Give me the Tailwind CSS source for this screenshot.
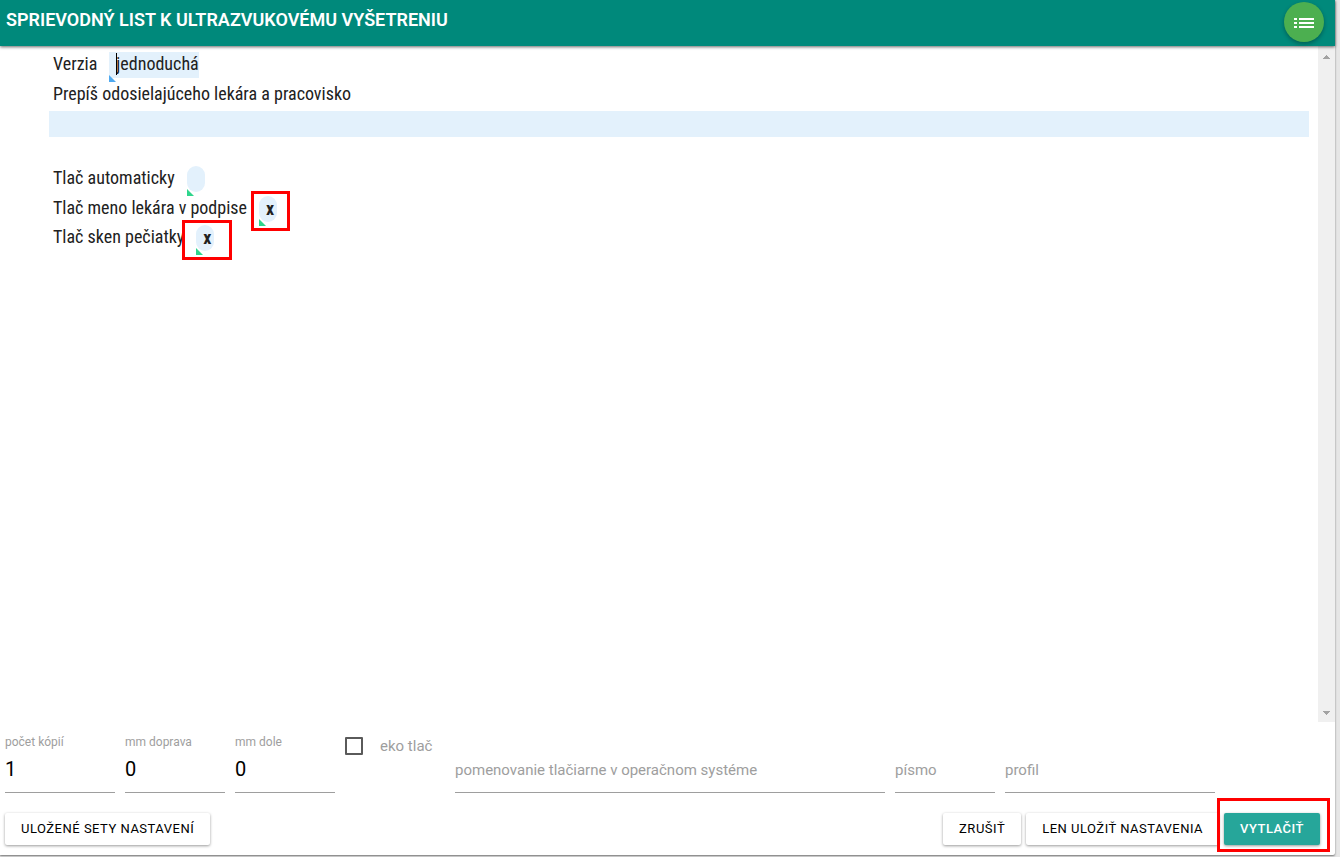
<!DOCTYPE html>
<html lang="sk">
<head>
    <meta charset="UTF-8">
    <meta name="viewport" content="width=device-width, initial-scale=1.0">
    <title>Sprievodný list</title>
    <script src="https://cdn.jsdelivr.net/npm/@tailwindcss/browser@4"></script>
</head>
<body class="bg-[#e6e6e6] font-[Roboto,sans-serif] text-black">
    <div class="h-screen pr-[5px] pb-[2px]">
        <div class="flex flex-col h-full bg-white rounded-br-xs shadow-[0_1px_2px_rgba(0,0,0,0.5)]">
            <header class="relative z-10 flex justify-between h-[46px] shrink-0 bg-[#00897b] pl-1.5 pr-[11px] shadow-[0_1px_3px_rgba(0,0,0,0.6)]">
                <h1 class="pt-1.5 text-[18px] leading-[27px] font-semibold text-white">SPRIEVODNÝ LIST K ULTRAZVUKOVÉMU VYŠETRENIU</h1>
                <button type="button" aria-label="Menu" class="mt-0.5 size-10 shrink-0 rounded-full bg-[#4caf50] shadow-[0_2px_4px_rgba(0,0,0,0.3)] flex items-center justify-center">
                    <svg class="w-5 h-3 text-white" viewBox="0 0 20 12" fill="currentColor" shape-rendering="crispEdges">
                        <path d="M0 2h3v2H0zM5 2h15v2H5zM0 6h3v2H0zM5 6h15v2H5zM0 10h3v2H0zM5 10h15v2H5z"></path>
                    </svg>
                </button>
            </header>

            <main class="flex flex-1 min-h-0">
                <form class="flex-1 pt-[3px] pl-[49px] pr-[9px] font-['Roboto_Condensed','Liberation_Sans_Narrow',Roboto,sans-serif] text-[18px] text-[#212121]">
                    <div class="flex h-[30px] pl-1 gap-3">
                        <label for="verzia" class="leading-[30px]">Verzia</label>
                        <div class="relative mt-[3px] h-[26px]">
                            <input id="verzia" type="text" value="jednoduchá" class="block w-[90px] h-[26px] pl-[7px] pb-1 bg-[#e3f1fc] outline-none">
                            <span class="absolute left-[7px] top-px w-px h-[22px] bg-black"></span>
                            <svg class="absolute left-0 top-[23px] size-[7px] text-[#4fa9ef]" viewBox="0 0 7 7" fill="currentColor"><path d="M0 0l7 7H0z"></path></svg>
                        </div>
                    </div>
                    <label for="lekar" class="block h-[32px] pl-1 leading-[30px]">Prepíš odosielajúceho lekára a pracovisko</label>
                    <input id="lekar" type="text" class="block w-full h-[26px] px-2 bg-[#e3f1fc] outline-none">

                    <div class="flex h-[30px] mt-[26px] pl-1 gap-3">
                        <label for="auto" class="leading-[30px]">Tlač automaticky</label>
                        <div class="relative mt-[3px] w-[18px] h-[26px]">
                            <input id="auto" type="checkbox" class="peer block appearance-none w-full h-full rounded-[9px] bg-[#e3f1fc]">
                            <span class="hidden peer-checked:block absolute inset-0 pl-1 text-center leading-[26px] font-bold pointer-events-none">x</span>
                            <svg class="absolute left-0 top-[23px] size-[7px] text-[#2fd58c]" viewBox="0 0 7 7" fill="currentColor"><path d="M0 0l7 7H0z"></path></svg>
                        </div>
                    </div>
                    <div class="flex h-[29px] pl-1 gap-3">
                        <label for="meno" class="leading-[30px]">Tlač meno lekára v podpise</label>
                        <div class="relative mt-[3px] w-[18px] h-[26px]">
                            <input id="meno" type="checkbox" checked class="peer block appearance-none w-full h-full rounded-[9px] bg-[#e3f1fc]">
                            <span class="hidden peer-checked:block absolute inset-0 pl-1 text-center leading-[26px] font-bold pointer-events-none">x</span>
                            <svg class="absolute left-0 top-[23px] size-[7px] text-[#2fd58c]" viewBox="0 0 7 7" fill="currentColor"><path d="M0 0l7 7H0z"></path></svg>
                            <span class="absolute -left-2 -top-[5px] w-[39px] h-10 border-3 border-[#f00] pointer-events-none"></span>
                        </div>
                    </div>
                    <div class="flex h-[29px] pl-1 gap-3">
                        <label for="sken" class="leading-[30px]">Tlač sken pečiatky</label>
                        <div class="relative mt-[3px] w-[18px] h-[26px]">
                            <input id="sken" type="checkbox" checked class="peer block appearance-none w-full h-full rounded-[9px] bg-[#e3f1fc]">
                            <span class="hidden peer-checked:block absolute inset-0 pl-1 text-center leading-[26px] font-bold pointer-events-none">x</span>
                            <svg class="absolute left-0 top-[23px] size-[7px] text-[#2fd58c]" viewBox="0 0 7 7" fill="currentColor"><path d="M0 0l7 7H0z"></path></svg>
                            <span class="absolute -left-[14px] -top-[5px] w-[50px] h-10 border-3 border-[#f00] pointer-events-none"></span>
                        </div>
                    </div>
                </form>
                <!-- scrollbar -->
                <div class="w-[17px] pt-[9px] pb-[7px] flex flex-col items-center justify-between bg-[#f0f0f0] text-[#a3a3a3]">
                    <svg class="w-[7px] h-1" viewBox="0 0 7 4" fill="currentColor" shape-rendering="crispEdges"><path d="M3 0h1v1h1v1h1v1h1v1H0V3h1V2h1V1h1z"></path></svg>
                    <svg class="w-[7px] h-1" viewBox="0 0 7 4" fill="currentColor" shape-rendering="crispEdges"><path d="M0 0h7v1H6v1H5v1H4v1H3V3H2V2H1V1H0z"></path></svg>
                </div>
            </main>

            <footer class="shrink-0 px-[5px]">
                <div class="flex h-[71px] pt-[13px] gap-2.5 text-[#9e9e9e]">
                    <div class="w-[110px] border-b border-[#9e9e9e]">
                        <label for="kopie" class="block text-[12px] leading-[14px]">počet kópií</label>
                        <input id="kopie" type="text" value="1" class="block w-full h-10 text-[20px] text-black outline-none">
                    </div>
                    <div class="w-[100px] border-b border-[#9e9e9e]">
                        <label for="doprava" class="block text-[12px] leading-[14px]">mm doprava</label>
                        <input id="doprava" type="text" value="0" class="block w-full h-10 text-[20px] text-black outline-none">
                    </div>
                    <div class="w-[100px] border-b border-[#9e9e9e]">
                        <label for="dole" class="block text-[12px] leading-[14px]">mm dole</label>
                        <input id="dole" type="text" value="0" class="block w-full h-10 text-[20px] text-black outline-none">
                    </div>
                    <label class="flex w-[100px] h-[22px] gap-[17px] items-center text-[15px] whitespace-nowrap">
                        <input type="checkbox" class="appearance-none size-[18px] border-2 border-[#5a5a5a] rounded-[1px]">
                        eko tlač
                    </label>
                    <input type="text" aria-label="pomenovanie tlačiarne v operačnom systéme" placeholder="pomenovanie tlačiarne v operačnom systéme" class="flex-1 max-w-[430px] pt-3.5 border-b border-[#9e9e9e] text-[15px] placeholder:text-[#9e9e9e] outline-none">
                    <input type="text" aria-label="písmo" placeholder="písmo" class="w-[100px] pt-3.5 border-b border-[#9e9e9e] text-[15px] placeholder:text-[#9e9e9e] outline-none">
                    <input type="text" aria-label="profil" placeholder="profil" class="w-[210px] pt-3.5 border-b border-[#9e9e9e] text-[15px] placeholder:text-[#9e9e9e] outline-none">
                </div>
                <div class="flex h-[62px] pt-5 pr-2.5 gap-[5px] text-[13px] tracking-[0.5px]">
                    <button type="button" class="h-8 px-4 rounded-xs bg-white shadow-[0_1px_3px_rgba(0,0,0,0.4)]">ULOŽENÉ SETY NASTAVENÍ</button>
                    <button type="button" class="ml-auto h-8 px-4 rounded-xs bg-white shadow-[0_1px_3px_rgba(0,0,0,0.4)]">ZRUŠIŤ</button>
                    <button type="button" class="h-8 px-4 rounded-xs bg-white shadow-[0_1px_3px_rgba(0,0,0,0.4)]">LEN ULOŽIŤ NASTAVENIA</button>
                    <div class="relative h-8">
                        <button type="button" class="h-8 px-4 rounded-xs bg-[#26a69a] text-white font-medium shadow-[0_1px_3px_rgba(0,0,0,0.4)]">VYTLAČIŤ</button>
                        <span class="absolute -left-[7px] -right-2.5 -top-[15px] -bottom-[7px] border-3 border-[#f00] pointer-events-none"></span>
                    </div>
                </div>
            </footer>
        </div>
    </div>
</body>
</html>
